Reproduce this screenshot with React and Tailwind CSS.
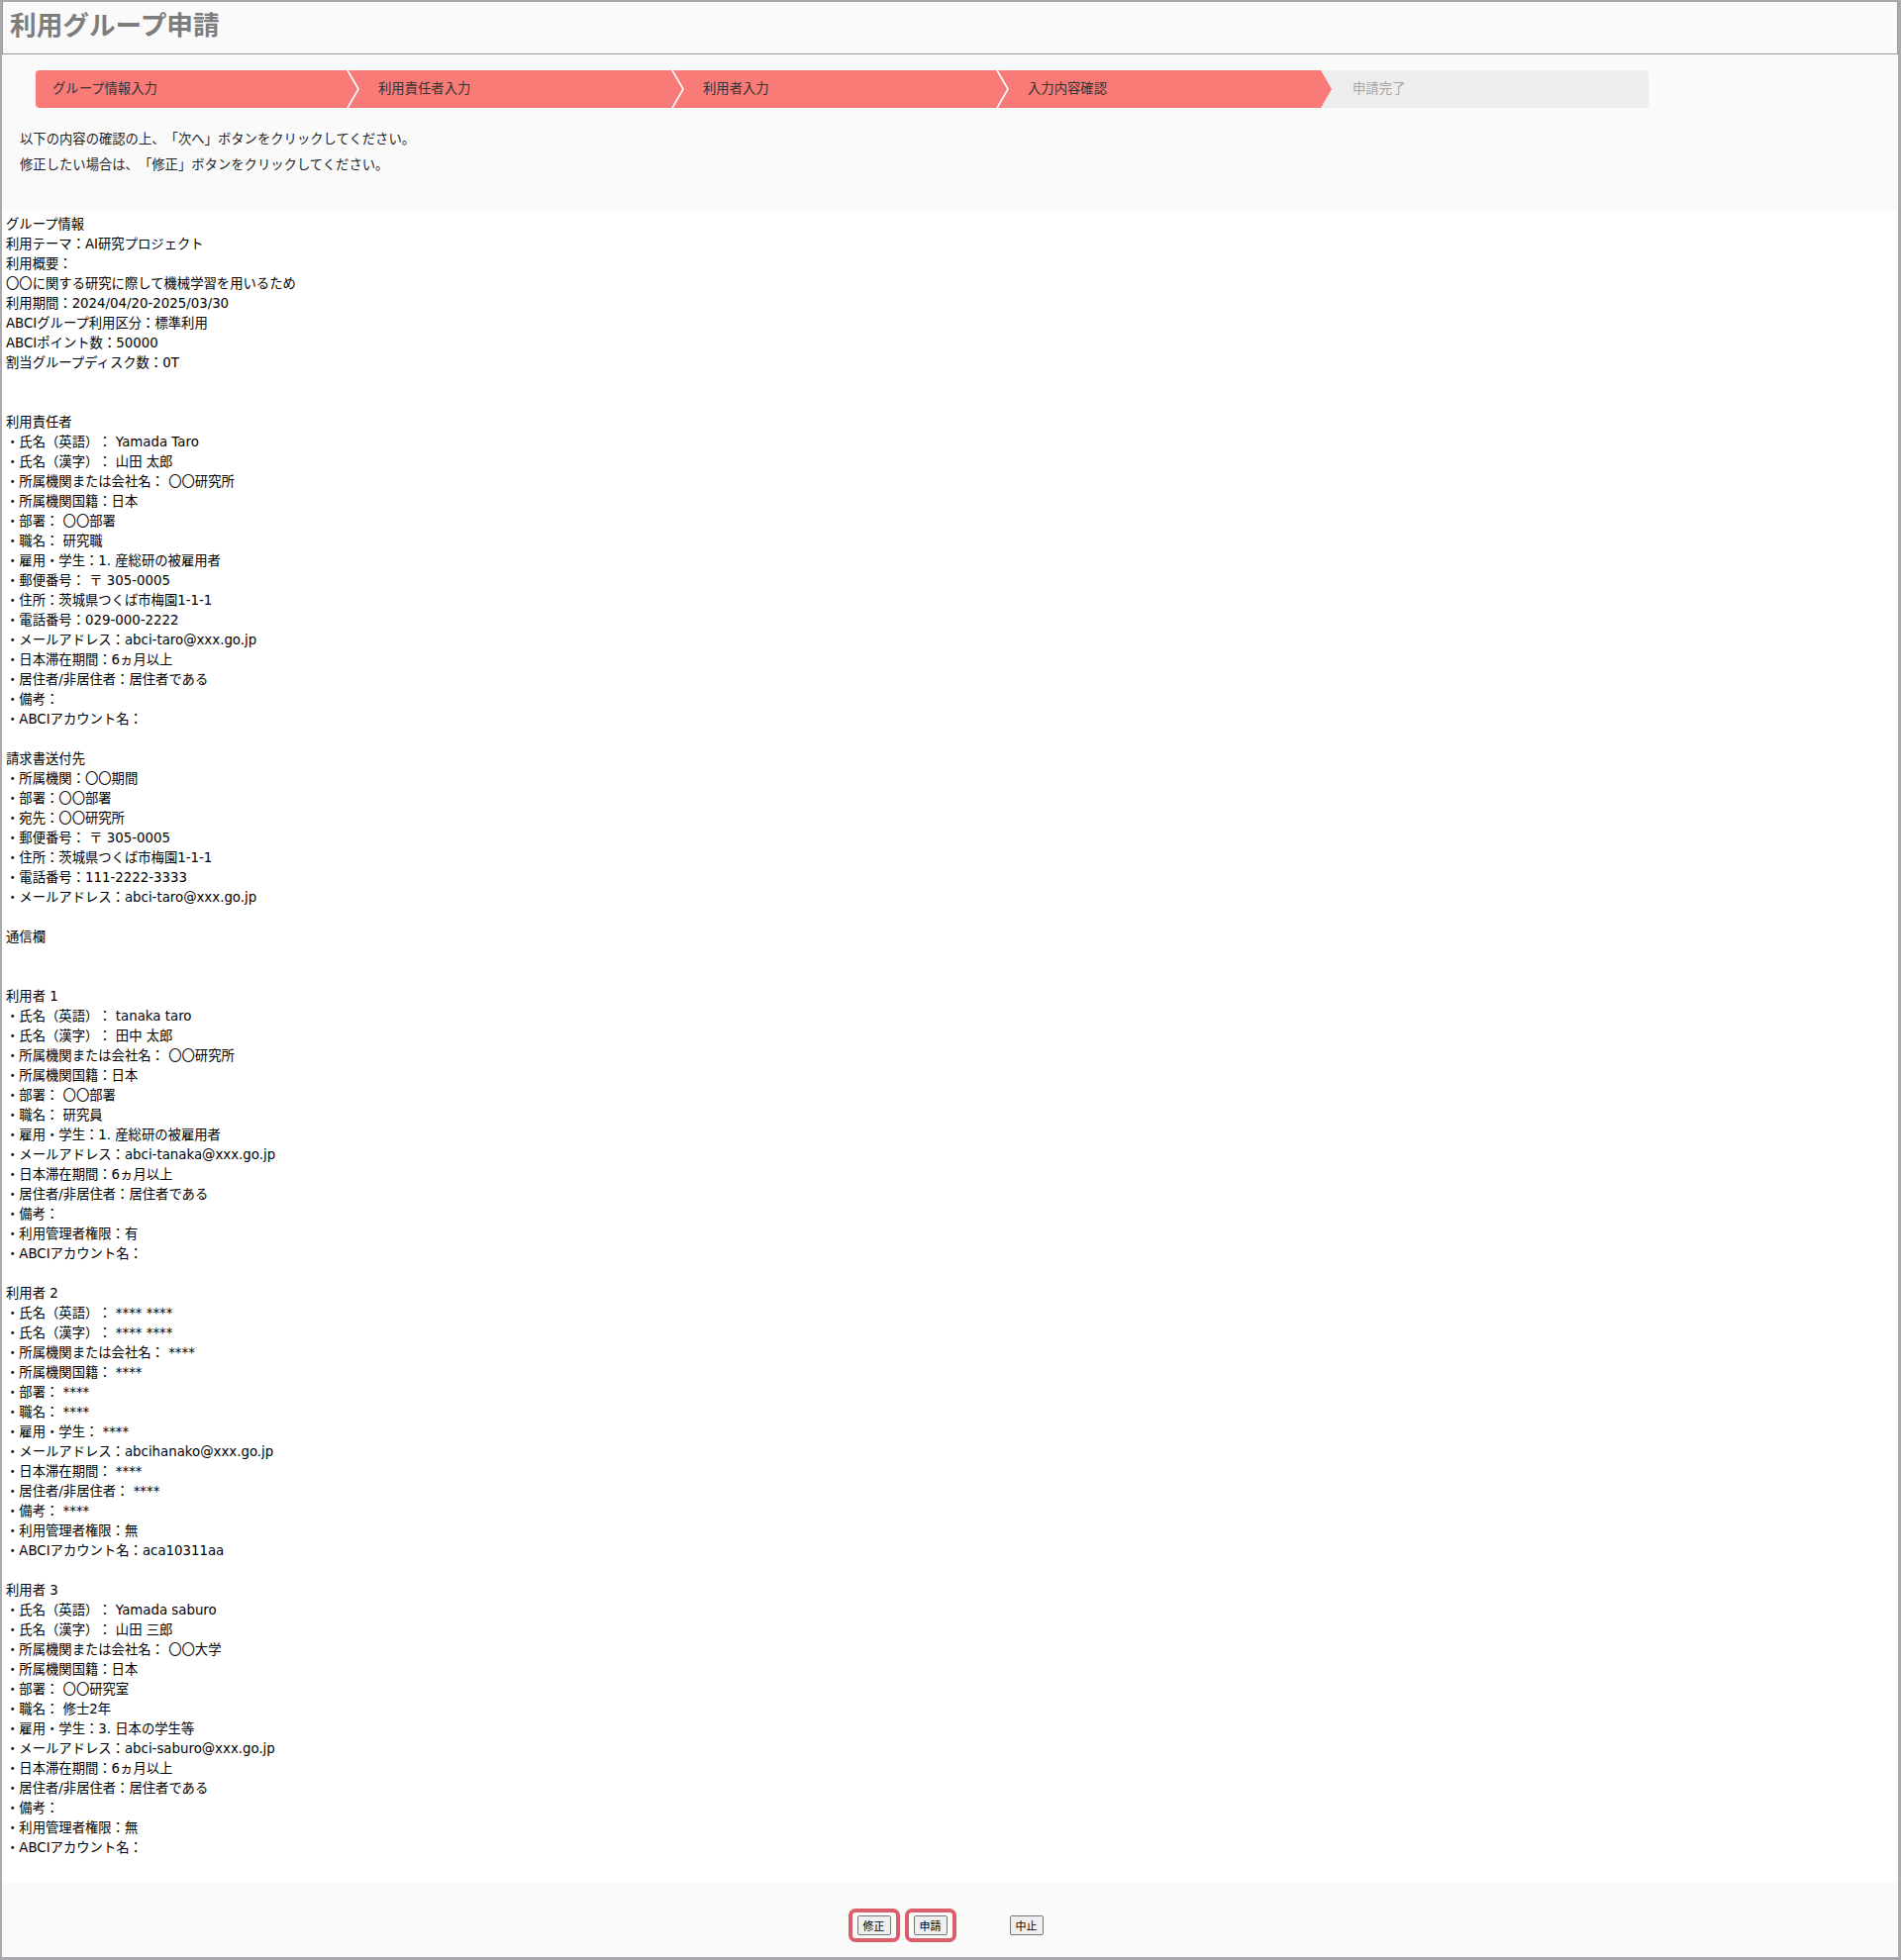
// 利用グループ申請 — 入力内容確認

const steps = [
  { label: 'グループ情報入力', done: true },
  { label: '利用責任者入力', done: true },
  { label: '利用者入力', done: true },
  { label: '入力内容確認', done: true },
  { label: '申請完了', done: false },
];

const lines = [
  'グループ情報',
  '利用テーマ：AI研究プロジェクト',
  '利用概要：',
  '〇〇に関する研究に際して機械学習を用いるため',
  '利用期間：2024/04/20-2025/03/30',
  'ABCIグループ利用区分：標準利用',
  'ABCIポイント数：50000',
  '割当グループディスク数：0T',
  '',
  '',
  '利用責任者',
  '・氏名（英語）： Yamada Taro',
  '・氏名（漢字）： 山田 太郎',
  '・所属機関または会社名： 〇〇研究所',
  '・所属機関国籍：日本',
  '・部署： 〇〇部署',
  '・職名： 研究職',
  '・雇用・学生：1. 産総研の被雇用者',
  '・郵便番号： 〒 305-0005',
  '・住所：茨城県つくば市梅園1-1-1',
  '・電話番号：029-000-2222',
  '・メールアドレス：abci-taro@xxx.go.jp',
  '・日本滞在期間：6ヵ月以上',
  '・居住者/非居住者：居住者である',
  '・備考：',
  '・ABCIアカウント名：',
  '',
  '請求書送付先',
  '・所属機関：〇〇期間',
  '・部署：〇〇部署',
  '・宛先：〇〇研究所',
  '・郵便番号： 〒 305-0005',
  '・住所：茨城県つくば市梅園1-1-1',
  '・電話番号：111-2222-3333',
  '・メールアドレス：abci-taro@xxx.go.jp',
  '',
  '通信欄',
  '',
  '',
  '利用者 1',
  '・氏名（英語）： tanaka taro',
  '・氏名（漢字）： 田中 太郎',
  '・所属機関または会社名： 〇〇研究所',
  '・所属機関国籍：日本',
  '・部署： 〇〇部署',
  '・職名： 研究員',
  '・雇用・学生：1. 産総研の被雇用者',
  '・メールアドレス：abci-tanaka@xxx.go.jp',
  '・日本滞在期間：6ヵ月以上',
  '・居住者/非居住者：居住者である',
  '・備考：',
  '・利用管理者権限：有',
  '・ABCIアカウント名：',
  '',
  '利用者 2',
  '・氏名（英語）： **** ****',
  '・氏名（漢字）： **** ****',
  '・所属機関または会社名： ****',
  '・所属機関国籍： ****',
  '・部署： ****',
  '・職名： ****',
  '・雇用・学生： ****',
  '・メールアドレス：abcihanako@xxx.go.jp',
  '・日本滞在期間： ****',
  '・居住者/非居住者： ****',
  '・備考： ****',
  '・利用管理者権限：無',
  '・ABCIアカウント名：aca10311aa',
  '',
  '利用者 3',
  '・氏名（英語）： Yamada saburo',
  '・氏名（漢字）： 山田 三郎',
  '・所属機関または会社名： 〇〇大学',
  '・所属機関国籍：日本',
  '・部署： 〇〇研究室',
  '・職名： 修士2年',
  '・雇用・学生：3. 日本の学生等',
  '・メールアドレス：abci-saburo@xxx.go.jp',
  '・日本滞在期間：6ヵ月以上',
  '・居住者/非居住者：居住者である',
  '・備考：',
  '・利用管理者権限：無',
  '・ABCIアカウント名：',
];

const stepShape = [
  'ml-[34px] w-[325px] pl-[17px] rounded-l-[4px] [clip-path:polygon(0_0,calc(100%_-_11px)_0,100%_50%,calc(100%_-_11px)_100%,0_100%)]',
  '-ml-[9px] w-[337px] pl-[30px] [clip-path:polygon(0_0,calc(100%_-_11px)_0,100%_50%,calc(100%_-_11px)_100%,0_100%,11px_50%)]',
  '-ml-[9px] w-[337px] pl-[30px] [clip-path:polygon(0_0,calc(100%_-_11px)_0,100%_50%,calc(100%_-_11px)_100%,0_100%,11px_50%)]',
  '-ml-[9px] w-[337px] pl-[30px] [clip-path:polygon(0_0,calc(100%_-_11px)_0,100%_50%,calc(100%_-_11px)_100%,0_100%,11px_50%)]',
  '-ml-[11px] w-[331px] pl-[32px] rounded-r-[4px]',
];

function StepBar() {
  return (
    <div className="flex h-[38px] mt-[16px]">
      {steps.map((s, i) => (
        <div
          key={s.label}
          className={`shrink-0 flex items-center text-[13.33px] ${stepShape[i]} ${
            s.done ? 'relative z-[1] bg-[#f87b78] text-[#333]' : 'bg-[#ededed] text-[#a6a6a6]'
          }`}
        >
          {s.label}
        </div>
      ))}
    </div>
  );
}

function Btn({ label, ring }) {
  return (
    <span className="relative inline-flex">
      {ring && (
        <span className="absolute -inset-x-[9px] -inset-y-[7px] border-4 border-[#d95f6b] rounded-[7px] pointer-events-none" />
      )}
      <button className="h-[20px] px-[5px] border border-[#767676] bg-[#efefef] rounded-[2px] text-[11px] leading-none text-black">
        {label}
      </button>
    </span>
  );
}

export default function App() {
  return (
    <div
      className="w-full h-[1980px] overflow-hidden flex flex-col border-t-2 border-l-2 border-r-[3px] border-b-[3px] border-[#a9a9ae] bg-[#fafafa] text-black [text-spacing-trim:space-all]"
      style={{ fontFamily: '"DejaVu Sans", "Noto Sans CJK JP", sans-serif' }}
    >
      {/* ── Title ── */}
      <div className="h-[53px] shrink-0 border-x border-b border-[#999] bg-[#fafafa] pl-[7px] pt-[9px]">
        <h1 className="text-[26.67px] leading-none font-bold text-[#7d7d7d] [font-family:'Noto_Sans_CJK_JP',sans-serif]">
          利用グループ申請
        </h1>
      </div>

      {/* ── Steps + guide ── */}
      <StepBar />
      <div className="pl-[18px] pt-[19px] pb-[33px] text-[13.33px] leading-[26px] text-[#222]">
        <p>以下の内容の確認の上、「次へ」ボタンをクリックしてください。</p>
        <p>修正したい場合は、「修正」ボタンをクリックしてください。</p>
      </div>

      {/* ── Confirmation body ── */}
      <div className="bg-white pl-[4px] pt-[4px] pb-[25px] text-[13.33px] leading-[20px]">
        {lines.map((t, i) => (
          <div key={i} className="h-[20px] whitespace-pre">
            {t}
          </div>
        ))}
      </div>

      {/* ── Buttons ── */}
      <div className="flex-1 flex justify-center items-start pt-[33px] [font-family:'Noto_Sans_CJK_JP',sans-serif]">
        <Btn label="修正" ring />
        <span className="w-[23px]" />
        <Btn label="申請" ring />
        <span className="w-[63px]" />
        <Btn label="中止" />
      </div>
    </div>
  );
}
